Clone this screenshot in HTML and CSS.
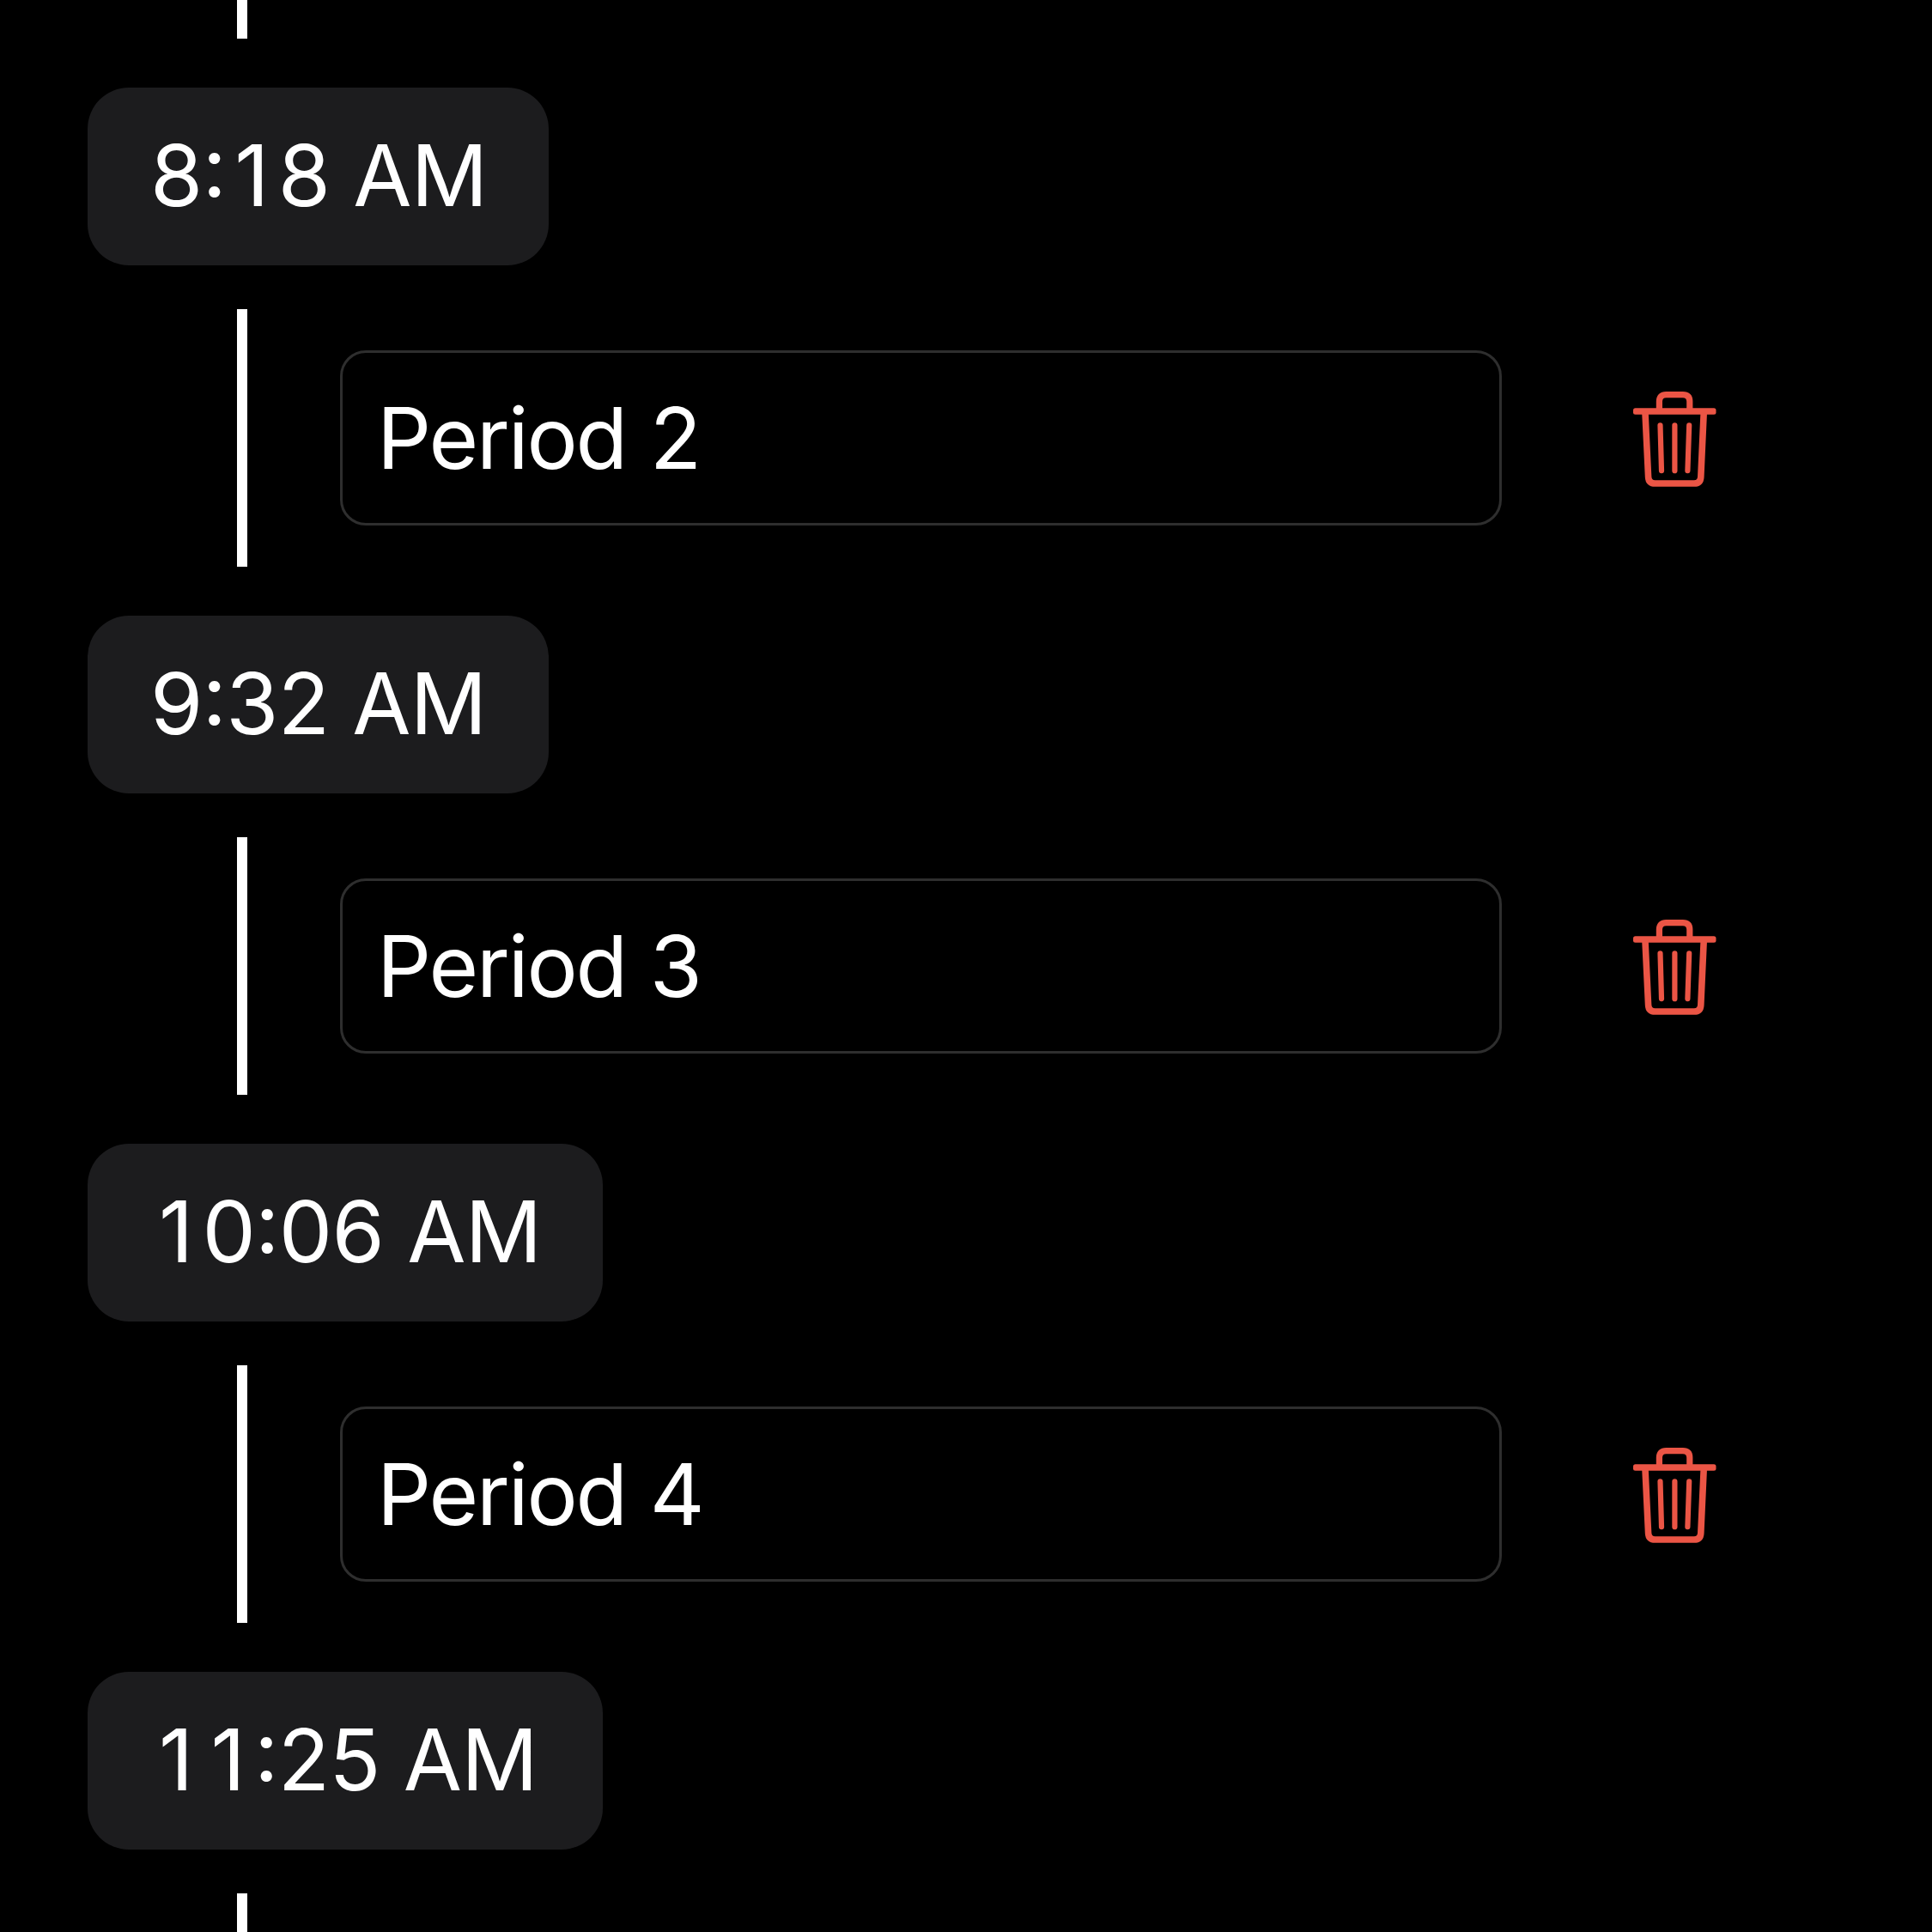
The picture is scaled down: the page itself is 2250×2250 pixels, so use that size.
FILE: index.html
```html
<!DOCTYPE html>
<html lang="en">
<head>
<meta charset="utf-8">
<title>Schedule</title>
<link rel="stylesheet" href="styles.css">
</head>
<body>
<svg class="symbols" width="0" height="0" aria-hidden="true">
  <symbol id="trash" viewBox="0 0 140 140">
    <rect x="22" y="35.200" width="96.500" height="7.600" rx="2.500" fill="currentColor"/>
    <g fill="none" stroke="currentColor" stroke-linejoin="round">
      <path stroke-width="7.200" d="M52.400 38V27.600Q52.400 19.600 60.400 19.600H79.800Q87.800 19.600 87.800 27.600V38"/>
      <path stroke-width="7.600" d="M36 41L39.600 115.500Q40 123 47.500 123H93Q100.400 123 100.800 115.500L104.200 41"/>
      <path stroke-width="6.200" stroke-linecap="round" d="M53.500 55.400L55 108.200M70.400 55.400V108.200M87.200 55.400L85.400 108.200"/>
    </g>
  </symbol>
</svg>
<main class="timeline">
  <div class="segment segment-first"><span class="rail"></span></div>
  <div class="time"><span>8:<span class="one">1</span>8 AM</span></div>
  <div class="segment"><span class="rail"></span><div class="field"><span>Period 2</span></div><button class="delete" aria-label="Delete"><svg><use href="#trash"/></svg></button></div>
  <div class="time"><span>9:32 AM</span></div>
  <div class="segment"><span class="rail"></span><div class="field"><span>Period 3</span></div><button class="delete" aria-label="Delete"><svg><use href="#trash"/></svg></button></div>
  <div class="time time-wide"><span><span class="one">1</span>0:06 AM</span></div>
  <div class="segment"><span class="rail"></span><div class="field"><span>Period 4</span></div><button class="delete" aria-label="Delete"><svg><use href="#trash"/></svg></button></div>
  <div class="time time-wide"><span><span class="one">1</span><span class="one">1</span>:25 AM</span></div>
  <div class="segment segment-last"><span class="rail"></span></div>
</main>
</body>
</html>
```
FILE: styles.css
```css
* { box-sizing: border-box; }

body {
  margin: 0;
  background: #000;
  color: #fff;
  font-family: Inter, "Liberation Sans", sans-serif;
  font-size: 99px;
  line-height: 120px;
}

.symbols { display: block; }

.timeline {
  display: flex;
  flex-direction: column;
  align-items: flex-start;
  height: 2250px;
  overflow: hidden;
}

.segment {
  display: flex;
  align-items: center;
  flex: none;
  height: 300px;
  padding-left: 276px;
}
.segment-first, .segment-last { height: 45px; }

.rail {
  width: 12px;
  height: 100%;
  background: #fff;
}

.time {
  flex: none;
  width: 537px;
  height: 207px;
  margin: 57px 0 51px 102px;
  padding: 42px 0 0 73px;
  border-radius: 48px;
  background: #1c1c1e;
  font-feature-settings: "case";
  letter-spacing: -0.8px;
  white-space: nowrap;
}
.time-wide { width: 600px; }

/* pads the narrow "1" to the width of the other digits */
.one { margin: 0 11px 0 10px; }

.field {
  width: 1353px;
  height: 204px;
  margin-left: 108px;
  padding: 39px 0 0 40px;
  border: 3px solid #2e2e2e;
  border-radius: 30px;
  letter-spacing: -2.2px;
  word-spacing: 2px;
  white-space: nowrap;
}

.delete {
  width: 140px;
  height: 140px;
  margin: 0 0 0 131px;
  padding: 0;
  border: 0;
  background: none;
  color: #eb5545;
}
.delete svg {
  display: block;
  width: 140px;
  height: 140px;
}
```
